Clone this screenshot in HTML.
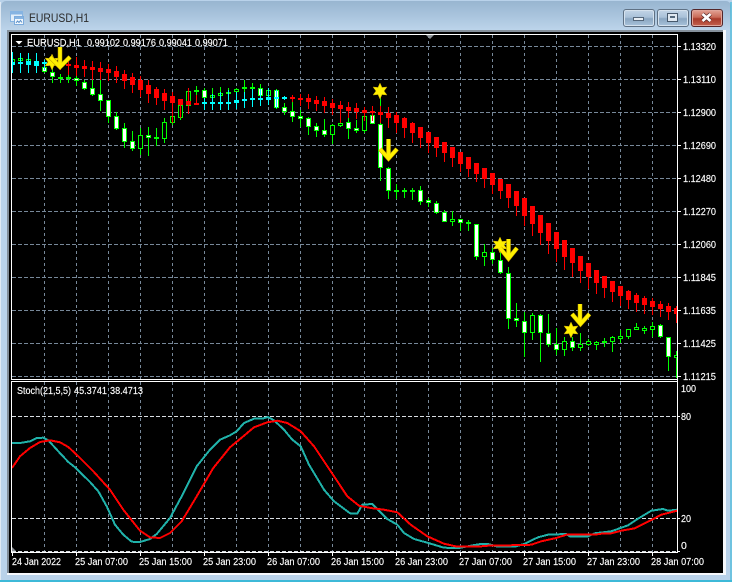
<!DOCTYPE html>
<html><head><meta charset="utf-8"><style>
html,body{margin:0;padding:0;width:732px;height:582px;overflow:hidden;background:#b9d2ea}
#w{position:absolute;left:0;top:0;width:732px;height:582px}
#t{position:absolute;left:1px;top:1px;width:730px;height:29px;background:linear-gradient(#98b5d0,#a9c4dd 50%,#bcd4ea);border-radius:5px 5px 0 0}
.b{position:absolute;top:9px;height:16px;width:30px;border:1px solid #5f7184;border-radius:3px;background:linear-gradient(#c3d5e7,#a9c1d8 45%,#8aa6c1 55%,#a9c3db);box-shadow:inset 0 0 0 1px #d5e2ee}
.c{background:linear-gradient(#e3a497,#c96a58 45%,#a83a2a 55%,#c4614e);border-color:#53262a;box-shadow:inset 0 0 0 1px #dfa59a}
svg{position:absolute;left:0;top:0}
text{font-family:"Liberation Sans",sans-serif;font-size:10.5px;fill:#fff;stroke:#fff;stroke-width:.15px}
</style></head><body><div id="w">
<div id="t"></div>
<svg width="18" height="20" style="left:9px;top:9px" viewBox="0 0 18 20"><rect x="1.500" y="2.500" width="12" height="10" fill="#e2eef9" stroke="#86b4e2"/><rect x="2" y="3" width="11" height="2.500" fill="#86b4e2"/><rect x="5.500" y="7.500" width="9" height="8" fill="#f2f8fd" stroke="#7cabdc"/><rect x="6" y="8" width="8" height="2" fill="#86b4e2"/><path d="M7 14l1.500-2 1.500 1.500 1.500-2 1.500 2" fill="none" stroke="#5a8fc8"/></svg>
<div class="b" style="left:623px"></div>
<div style="position:absolute;left:633px;top:17px;width:9px;height:2px;background:#e8eef4;border:1px solid #55677a"></div>
<div class="b" style="left:657px"></div>
<div style="position:absolute;left:667px;top:13px;width:9px;height:7px;border:1px solid #47596c;background:#dfe8f1"></div>
<div style="position:absolute;left:670px;top:16px;width:5px;height:2px;background:#54687c"></div>
<div class="b c" style="left:691px"></div>
<svg width="732" height="582">
<text x="29" y="22" textLength="60" lengthAdjust="spacingAndGlyphs" style="font-size:12px;fill:#2a2a2a;stroke:none">EURUSD,H1</text>
<path d="M702.500 14l8 7M710.500 14l-8 7" stroke="#4a2020" stroke-width="4" fill="none"/>
<path d="M702.500 14l8 7M710.500 14l-8 7" stroke="#fff" stroke-width="2.800" fill="none"/>
<rect x="7" y="30" width="719" height="545" fill="#fff" opacity=".85"/>
<rect x="7" y="30" width="716" height="2" fill="#86919c"/>
<rect x="7" y="30" width="2" height="543" fill="#808c98"/>
<rect x="9" y="32" width="714" height="541" fill="#000"/>
<rect x="0" y="580" width="732" height="2" fill="#3eb9d8"/>
<rect x="730" y="2" width="2" height="578" fill="#3eb9d8" opacity=".6"/>
<rect x="0" y="2" width="1" height="578" fill="#dfe9f3"/>

<g stroke="#778899" stroke-width="1" stroke-dasharray="3 3" fill="none" shape-rendering="crispEdges">
<path d="M44.500 35V379M76.500 35V379M108.500 35V379M140.500 35V379M172.500 35V379M204.500 35V379M236.500 35V379M268.500 35V379M300.500 35V379M332.500 35V379M364.500 35V379M396.500 35V379M428.500 35V379M460.500 35V379M492.500 35V379M524.500 35V379M556.500 35V379M588.500 35V379M620.500 35V379M652.500 35V379"/>
<path d="M44.500 382V552M76.500 382V552M108.500 382V552M140.500 382V552M172.500 382V552M204.500 382V552M236.500 382V552M268.500 382V552M300.500 382V552M332.500 382V552M364.500 382V552M396.500 382V552M428.500 382V552M460.500 382V552M492.500 382V552M524.500 382V552M556.500 382V552M588.500 382V552M620.500 382V552M652.500 382V552"/>
<path stroke-dasharray="4 2" d="M12 46.500H677M12 79.500H677M12 112.500H677M12 145.500H677M12 178.500H677M12 211.500H677M12 244.500H677M12 277.500H677M12 310.500H677M12 343.500H677M12 376.500H677"/>
<path stroke="#d8dde2" stroke-dasharray="4 2" d="M12 416.500H677M12 518.500H677M12 551.500H677"/>
</g>

<clipPath id="mc"><rect x="12" y="35" width="665" height="344"/></clipPath>
<g clip-path="url(#mc)" fill="none" shape-rendering="crispEdges">
<path stroke="#00ff00" stroke-width="1" d="M44.500 62V73M52.500 68V83M60.500 74V83M68.500 74V83M76.500 75V86M84.500 80V90M92.500 77V96M100.500 79V111M108.500 100V123M116.500 112V130M124.500 123V148M132.500 131V151M140.500 128V155M148.500 127V156M156.500 128V146M164.500 118V143M172.500 107V125M180.500 100V120M188.500 88V114M196.500 86V105M204.500 88V100M212.500 88V98M220.500 87V97M228.500 88V95M236.500 88V92M244.500 80V92M252.500 83V92M260.500 84V96M268.500 89V96M276.500 89V109M284.500 103V115M292.500 102V122M300.500 110V127M308.500 117V135M316.500 123V137M324.500 119V137M332.500 124V144M340.500 117V127M348.500 118V139M356.500 120V133M364.500 115V133M372.500 114V124M380.500 97V181M388.500 167V199M396.500 184V199M404.500 188V198M412.500 188V200M420.500 186V205M428.500 198V207M436.500 201V214M444.500 210V222M452.500 211V226M460.500 219V231M468.500 220V231M476.500 224V260M484.500 244V266M492.500 248V264M500.500 251V274M508.500 267V329M516.500 303V327M524.500 312V357M532.500 313V340M540.500 314V362M548.500 314V347M556.500 328V355M564.500 337V356M572.500 337V351M580.500 333V351M588.500 339V346M596.500 341V350M604.500 338V347M612.500 336V352M620.500 330V343M628.500 329V339M636.500 323V330M644.500 326V334M652.500 322V337M660.500 324V338M668.500 337V371M676.500 351V378"/>
<path stroke="#00ff00" stroke-width="5" d="M12.500 59V65M20.500 58V61M28.500 59V64M36.500 61V66M44.500 67V72M52.500 72V77M60.500 77V79M68.500 77V79M76.500 78V81M84.500 82V89M92.500 88V95M100.500 94V101M108.500 100V117M116.500 116V129M124.500 128V142M132.500 141V149M140.500 135V149M148.500 135V138M156.500 137V139M164.500 122V139M172.500 116V123M180.500 105V118M188.500 91V106M196.500 90V92M204.500 90V98M212.500 95V98M220.500 93V96M228.500 92V94M236.500 89V92M244.500 87V89M252.500 87V89M260.500 88V96M268.500 90V96M276.500 90V108M284.500 107V112M292.500 111V117M300.500 116V119M308.500 118V127M316.500 126V131M324.500 130V135M332.500 125V135M340.500 123V126M348.500 122V129M356.500 128V131M364.500 116V131M372.500 115V124M380.500 124V168M388.500 168V191M396.500 190V192M404.500 190V192M412.500 190V192M420.500 190V202M428.500 200V203M436.500 203V213M444.500 212V222M452.500 219V222M460.500 219V223M468.500 222V224M476.500 224V257M484.500 252V257M492.500 252V260M500.500 260V273M508.500 273V319M516.500 318V321M524.500 321V333M532.500 315V333M540.500 315V333M548.500 333V345M556.500 344V350M564.500 341V350M572.500 341V348M580.500 344V348M588.500 341V345M596.500 342V345M604.500 341V343M612.500 337V342M620.500 336V339M628.500 329V337M636.500 327V330M644.500 328V331M652.500 326V330M660.500 325V337M668.500 337V357M676.500 355V358"/>
<path stroke="#ffffff" stroke-width="3" d="M44.500 68V71M52.500 73V76M76.500 79V80M84.500 83V88M92.500 89V94M100.500 95V100M108.500 101V116M116.500 117V128M124.500 129V141M132.500 142V148M148.500 136V137M204.500 91V97M260.500 89V95M276.500 91V107M284.500 108V111M292.500 112V116M300.500 117V118M308.500 119V126M316.500 127V130M324.500 131V134M348.500 123V128M356.500 129V130M372.500 116V123M380.500 125V167M388.500 169V190M420.500 191V201M428.500 201V202M436.500 204V212M444.500 213V221M460.500 220V222M476.500 225V256M492.500 253V259M500.500 261V272M508.500 274V318M516.500 319V320M524.500 322V332M540.500 316V332M548.500 334V344M556.500 345V349M572.500 342V347M660.500 326V336M668.500 338V356"/>
<path stroke="#000000" stroke-width="3" d="M12.500 60V64M20.500 59V60M28.500 60V63M36.500 62V65M140.500 136V148M164.500 123V138M172.500 117V122M180.500 106V117M188.500 92V105M212.500 96V97M220.500 94V95M236.500 90V91M268.500 91V95M332.500 126V134M340.500 124V125M364.500 117V130M452.500 220V221M484.500 253V256M532.500 316V332M564.500 342V349M580.500 345V347M588.500 342V344M596.500 343V344M612.500 338V341M620.500 337V338M628.500 330V336M636.500 328V329M644.500 329V330M652.500 327V329M676.500 356V357"/>
<path stroke="#00ffff" stroke-width="1" d="M12.500 52V73M20.500 53V73M28.500 53V73M36.500 53V73M44.500 60V70M204.500 98V110M212.500 94V110M220.500 92V110M228.500 90V110M236.500 92V109M244.500 92V108M252.500 89V107M260.500 89V106M268.500 88V105M276.500 90V108M284.500 96V100"/>
<path stroke="#00ffff" stroke-width="5" d="M12.500 62V65M20.500 62V64M28.500 61V65M36.500 61V66M44.500 62V64M204.500 102V104M212.500 102V104M220.500 102V104M228.500 102V104M236.500 100V103M244.500 99V101M252.500 98V100M260.500 98V100M268.500 97V100M276.500 97V99M284.500 97V99"/>
<path stroke="#ff0000" stroke-width="1" d="M52.500 58V68M60.500 56V70M68.500 58V75M76.500 57V76M84.500 60V77M92.500 61V80M100.500 62V80M108.500 64V81M116.500 66V83M124.500 70V89M132.500 73V93M140.500 76V97M148.500 80V103M156.500 87V105M164.500 89V110M172.500 92V123M180.500 99V118M188.500 88V114M196.500 95V105M292.500 95V102M300.500 94V106M308.500 94V109M316.500 96V111M324.500 97V113M332.500 99V115M340.500 101V123M348.500 102V118M356.500 103V119M364.500 107V121M372.500 106V121M380.500 106V123M388.500 107V128M396.500 112V133M404.500 117V138M412.500 122V143M420.500 127V148M428.500 132V153M436.500 137V157M444.500 142V162M452.500 147V167M460.500 152V172M468.500 157V177M476.500 163V182M484.500 168V188M492.500 173V194M500.500 179V199M508.500 184V208M516.500 191V216M524.500 198V226M532.500 206V236M540.500 215V245M548.500 223V254M556.500 232V262M564.500 240V270M572.500 248V277M580.500 256V283M588.500 263V289M596.500 270V294M604.500 276V298M612.500 281V302M620.500 286V306M628.500 290V309M636.500 293V312M644.500 296V314M652.500 298V315M660.500 301V317M668.500 303V320M676.500 306V323"/>
<path stroke="#ff0000" stroke-width="5" d="M52.500 62V64M60.500 63V65M68.500 64V66M76.500 65V68M84.500 66V69M92.500 67V70M100.500 68V72M108.500 69V73M116.500 71V77M124.500 74V81M132.500 77V85M140.500 80V90M148.500 85V94M156.500 89V98M164.500 93V101M172.500 96V103M180.500 99V105M188.500 101V105M196.500 103V105M292.500 97V99M300.500 98V100M308.500 98V102M316.500 100V104M324.500 101V106M332.500 103V108M340.500 105V109M348.500 107V111M356.500 108V112M364.500 110V113M372.500 111V113M380.500 112V115M388.500 113V118M396.500 115V123M404.500 118V128M412.500 123V133M420.500 127V138M428.500 132V143M436.500 137V148M444.500 142V153M452.500 147V158M460.500 152V164M468.500 157V169M476.500 163V174M484.500 168V179M492.500 173V185M500.500 179V191M508.500 184V198M516.500 191V206M524.500 198V216M532.500 206V224M540.500 215V233M548.500 223V241M556.500 232V249M564.500 240V257M572.500 248V263M580.500 256V271M588.500 263V277M596.500 270V283M604.500 276V288M612.500 281V292M620.500 286V296M628.500 291V300M636.500 295V303M644.500 298V305M652.500 301V307M660.500 304V309M668.500 306V312M676.500 308V314"/>
</g>

<g fill="#fff000" stroke="#c8a800" stroke-width=".5">
<path d="M52 54l2 4.500 5-.5-3 4 3 4-5-.5-2 4.500-2-4.500-5 .5 3-4-3-4 5 .5z"/>
<path d="M380 83l2 4.500 5-.5-3 4 3 4-5-.5-2 4.500-2-4.500-5 .5 3-4-3-4 5 .5z"/>
<path d="M500 237l2 4.500 5-.5-3 4 3 4-5-.5-2 4.500-2-4.500-5 .5 3-4-3-4 5 .5z"/>
<path d="M571 322l2 4.500 5-.5-3 4 3 4-5-.5-2 4.500-2-4.500-5 .5 3-4-3-4 5 .5z"/>
</g>
<g fill="none" stroke="#b89a00" stroke-width="4.500">
<path d="M60 47V66M50 57l10 10 10-10"/>
<path d="M388.500 139V158M380 149l8.500 9.500 8.500-9.500"/>
<path d="M508.500 239V258M500 248l8.500 10.500 8.500-10.500"/>
<path d="M580 304V323M572 314l8.500 10 9-10"/>
</g>
<g fill="none" stroke="#fff000" stroke-width="3.500">
<path d="M60 47V66M50 57l10 10 10-10"/>
<path d="M388.500 139V158M380 149l8.500 9.500 8.500-9.500"/>
<path d="M508.500 239V258M500 248l8.500 10.500 8.500-10.500"/>
<path d="M580 304V323M572 314l8.500 10 9-10"/>
</g>

<g fill="none" stroke-width="2" stroke-linejoin="round" shape-rendering="crispEdges">
<polyline stroke="#20b2aa" points="12,443 20,443 30,441.300 36.700,438 43.300,437.700 48.300,440.300 58.300,451.300 68.300,462 75,467.300 90,482 98.300,491.300 106.700,506.300 115,524.700 123.300,534.700 131.700,541.700 140,542 150,539 156.700,534 170,518 181.700,496.300 196.700,466.300 210,449.700 220,439.700 230,435.300 236.700,431.300 244,423 254,418.700 262.300,418.700 268,417 274,420.300 284,429.700 292.300,439.700 300.700,446.300 309,464.700 324,489.700 334,501.300 344,508.700 350.700,513.700 357.300,513.700 362.300,504.700 372.300,504 387.300,519 397.300,524.700 404,533 414,539 427.300,542.700 444,547.700 459,548 470.700,545.700 480.700,544 488,544 496.300,546.300 516.300,546.300 524.700,543.700 538,537.300 548,534.700 566.300,534 569.700,536.300 588,536.300 594.700,533.300 611.300,531.300 628,525.300 638,518.700 651.300,510.700 663,509 668,510.700 677,509.700"/>
<polyline stroke="#ff0000" points="12,468 20,456.300 30,448 40,442 50,440.300 60,442.300 68.300,447 78.300,456.300 93.300,471.300 110,489.700 123.300,509.700 140,530.700 150,537.300 160,538 170,533 181.700,521.300 196.700,496.300 213.300,468 230,447.300 244,435.700 254,427.300 267.300,422.300 277.300,420.700 287.300,423 300.700,431.300 314,446.300 330.700,471.300 347.300,496.300 359,505.700 370.700,508 384,509.700 397.300,512.300 410.700,524.700 427.300,536.300 444,543.700 457.300,546.700 477.300,546.700 488,545.700 524.700,545 531.300,544.700 541.300,541.300 556.300,538 566.300,534.700 594.700,534.700 601.300,533.700 611.300,533.300 621.300,530.700 634.700,528.300 651.300,520 661.300,514.700 677,510.700"/>
</g>

<g fill="#fff" shape-rendering="crispEdges">
<rect x="11" y="34" width="667" height="1"/>
<rect x="11" y="34" width="1" height="346"/>
<rect x="11" y="379" width="667" height="1"/>
<rect x="11" y="381" width="667" height="1"/>
<rect x="11" y="381" width="1" height="172"/>
<rect x="677" y="34" width="1" height="519"/>
<rect x="11" y="552" width="667" height="1"/>
<path d="M678 46h3v1h-3zM678 79h3v1h-3zM678 112h3v1h-3zM678 145h3v1h-3zM678 178h3v1h-3zM678 211h3v1h-3zM678 244h3v1h-3zM678 277h3v1h-3zM678 310h3v1h-3zM678 343h3v1h-3zM678 376h3v1h-3zM678 416h2v1h-2zM678 518h2v1h-2zM678 551h2v1h-2z"/>
<path d="M12 553h1v3h-1zM76 553h1v3h-1zM140 553h1v3h-1zM204 553h1v3h-1zM268 553h1v3h-1zM332 553h1v3h-1zM396 553h1v3h-1zM460 553h1v3h-1zM524 553h1v3h-1zM588 553h1v3h-1zM652 553h1v3h-1z"/>
</g>
<path d="M426 35h8l-4 4z" fill="#8a8f94"/>
<path d="M12 547l4 4h-4z" fill="#8a8f94"/>
<path d="M15.500 41h7l-3.500 3.500z" fill="#fff"/>

<text x="27" y="46" textLength="54" lengthAdjust="spacingAndGlyphs">EURUSD,H1</text>
<text x="87" y="46" textLength="33" lengthAdjust="spacingAndGlyphs">0.99102</text>
<text x="123" y="46" textLength="33" lengthAdjust="spacingAndGlyphs">0.99176</text>
<text x="159" y="46" textLength="33" lengthAdjust="spacingAndGlyphs">0.99041</text>
<text x="195" y="46" textLength="33" lengthAdjust="spacingAndGlyphs">0.99071</text>
<text x="17" y="394" textLength="54" lengthAdjust="spacingAndGlyphs">Stoch(21,5,5)</text>
<text x="74" y="394" textLength="33" lengthAdjust="spacingAndGlyphs">45.3741</text>
<text x="110" y="394" textLength="33" lengthAdjust="spacingAndGlyphs">38.4713</text>

<g>
<text x="683" y="50" textLength="33" lengthAdjust="spacingAndGlyphs">1.13320</text>
<text x="683" y="83" textLength="33" lengthAdjust="spacingAndGlyphs">1.13110</text>
<text x="683" y="116" textLength="33" lengthAdjust="spacingAndGlyphs">1.12900</text>
<text x="683" y="149" textLength="33" lengthAdjust="spacingAndGlyphs">1.12690</text>
<text x="683" y="182" textLength="33" lengthAdjust="spacingAndGlyphs">1.12480</text>
<text x="683" y="215" textLength="33" lengthAdjust="spacingAndGlyphs">1.12270</text>
<text x="683" y="248" textLength="33" lengthAdjust="spacingAndGlyphs">1.12060</text>
<text x="683" y="281" textLength="33" lengthAdjust="spacingAndGlyphs">1.11845</text>
<text x="683" y="314" textLength="33" lengthAdjust="spacingAndGlyphs">1.11635</text>
<text x="683" y="347" textLength="33" lengthAdjust="spacingAndGlyphs">1.11425</text>
<text x="683" y="380" textLength="33" lengthAdjust="spacingAndGlyphs">1.11215</text>
<text x="681" y="392" textLength="15" lengthAdjust="spacingAndGlyphs">100</text>
<text x="681" y="420" textLength="10" lengthAdjust="spacingAndGlyphs">80</text>
<text x="681" y="522" textLength="10" lengthAdjust="spacingAndGlyphs">20</text>
<text x="681" y="549">0</text>
<text x="12" y="565" textLength="49" lengthAdjust="spacingAndGlyphs">24 Jan 2022</text>
<text x="75" y="565" textLength="53" lengthAdjust="spacingAndGlyphs">25 Jan 07:00</text>
<text x="139" y="565" textLength="53" lengthAdjust="spacingAndGlyphs">25 Jan 15:00</text>
<text x="203" y="565" textLength="53" lengthAdjust="spacingAndGlyphs">25 Jan 23:00</text>
<text x="267" y="565" textLength="53" lengthAdjust="spacingAndGlyphs">26 Jan 07:00</text>
<text x="331" y="565" textLength="53" lengthAdjust="spacingAndGlyphs">26 Jan 15:00</text>
<text x="395" y="565" textLength="53" lengthAdjust="spacingAndGlyphs">26 Jan 23:00</text>
<text x="459" y="565" textLength="53" lengthAdjust="spacingAndGlyphs">27 Jan 07:00</text>
<text x="523" y="565" textLength="53" lengthAdjust="spacingAndGlyphs">27 Jan 15:00</text>
<text x="587" y="565" textLength="53" lengthAdjust="spacingAndGlyphs">27 Jan 23:00</text>
<text x="651" y="565" textLength="53" lengthAdjust="spacingAndGlyphs">28 Jan 07:00</text>
</g>
</svg>
</div></body></html>
